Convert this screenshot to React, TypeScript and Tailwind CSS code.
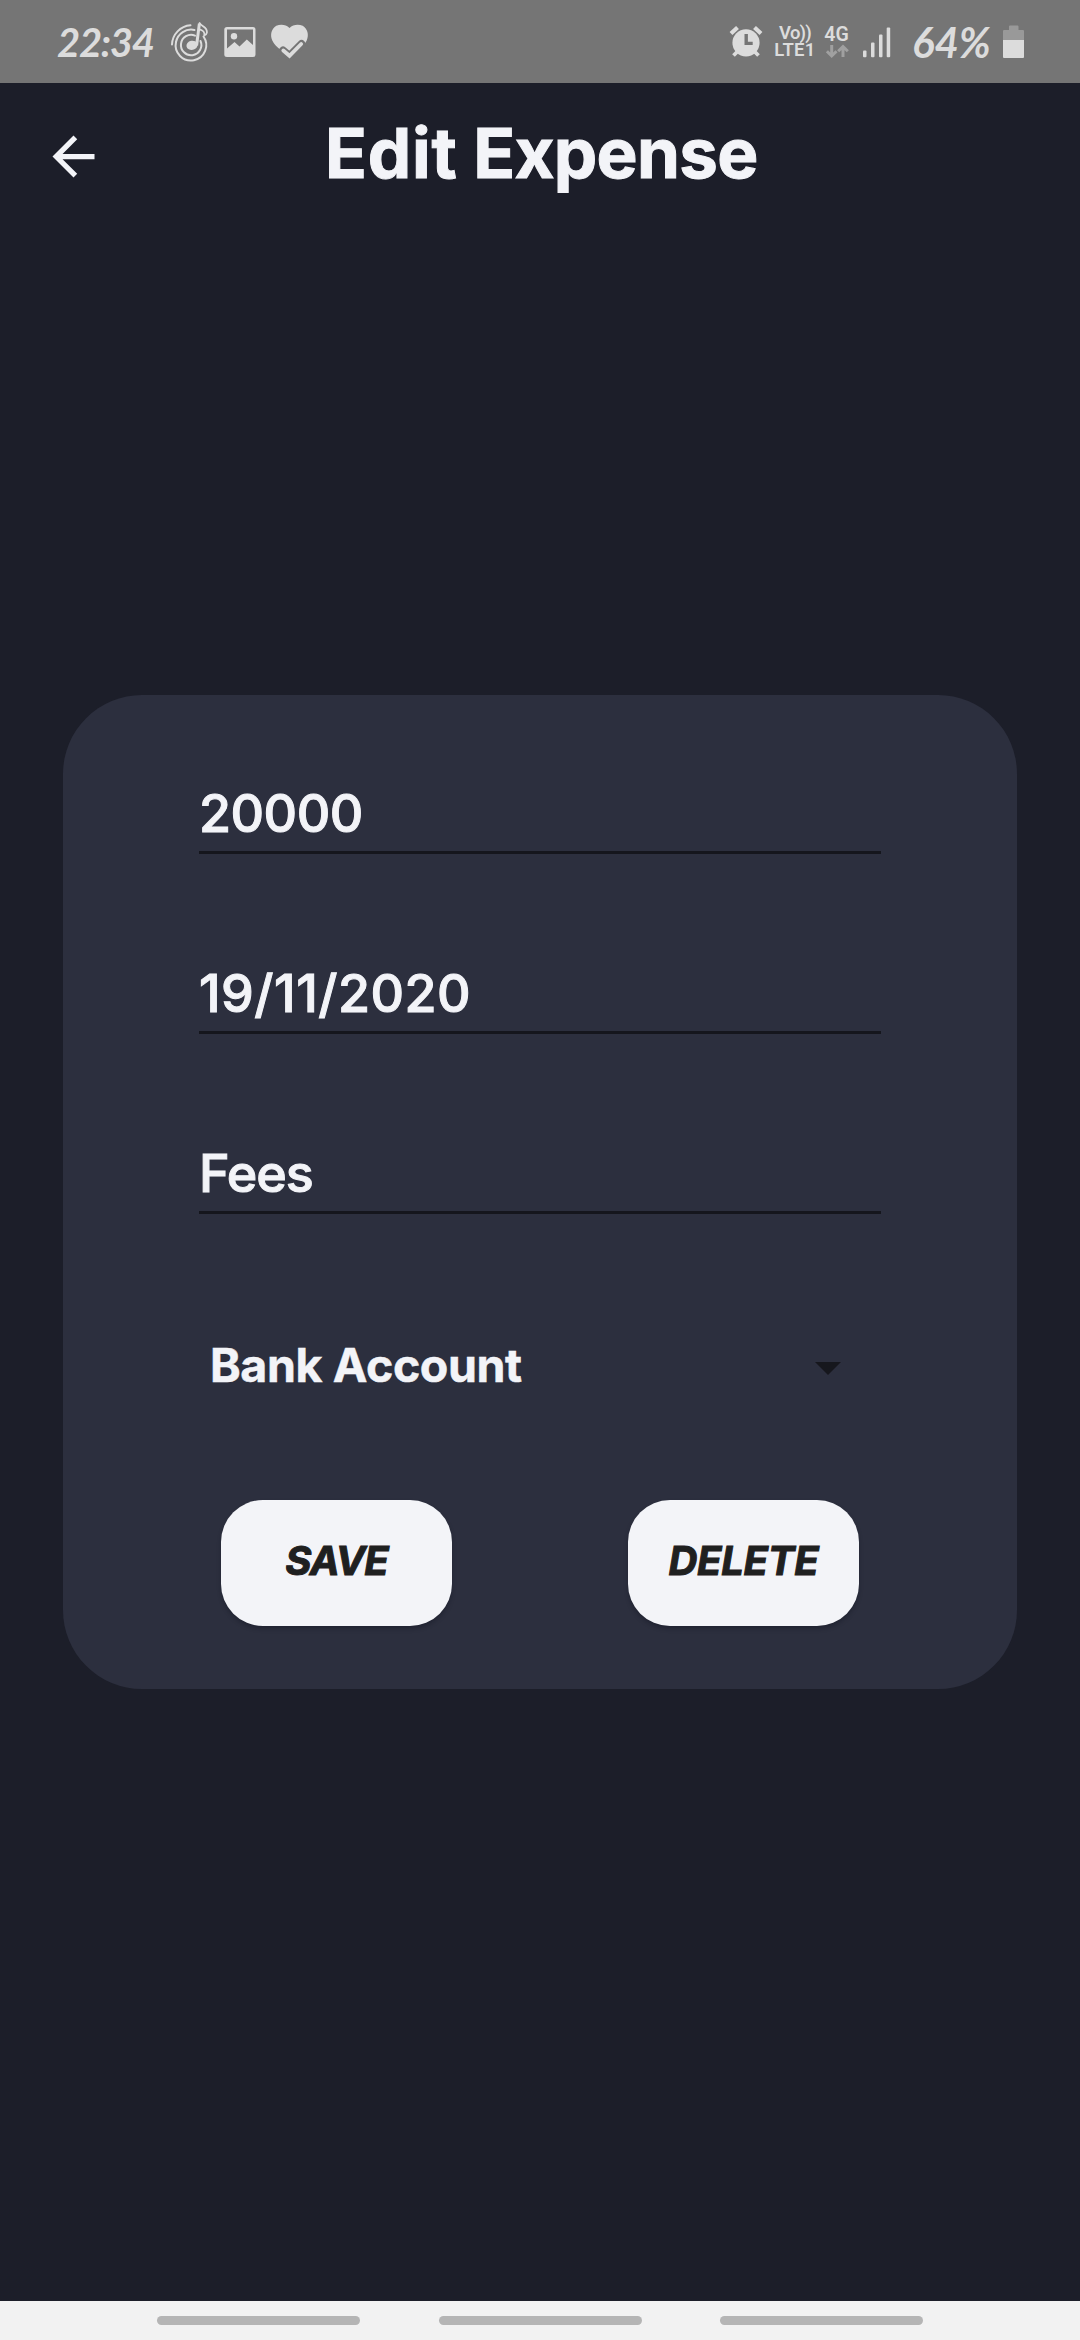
function MusicIcon() {
  return (
    <svg className="ml-[13px] h-[46px] w-11 shrink-0" viewBox="166 19 44 46" fill="none" stroke="#dcdcdc" strokeWidth="2" strokeLinecap="round">
      <path d="M171 44.5A20 20 0 0 1 189.5 25.3" />
      <path d="M175 42A15.5 15.5 0 0 1 193.5 30" />
      <path d="M175 42A15.3 15.3 0 1 0 202.5 36.5" />
      <path d="M194 35.6A10.2 10.2 0 1 0 199.5 41" />
      <ellipse cx="191" cy="45.3" rx="5.6" ry="4.6" fill="#dcdcdc" stroke="none" transform="rotate(-12 191 45.3)" />
      <path d="M195.6 45.5L198.4 23.5" strokeWidth="3" strokeLinecap="butt" />
      <path d="M198.6 23c1.6 3.8 8 3.6 7.3 9.6c-.3 1.6-1.6 2.6-2.6 2.9c.9-4.6-2.5-5.2-5-6.3" strokeWidth="1.8" strokeLinejoin="round" />
    </svg>
  );
}

function ImageIcon() {
  return (
    <svg className="ml-3 h-8 w-[34px] shrink-0" viewBox="222 25 34 32">
      <path
        fill="#dcdcdc"
        fillRule="evenodd"
        d="M226 26H252Q254.5 26 254.5 28.5V53.5Q254.5 56 252 56H226Q223.3 56 223.3 53.5V28.5Q223.3 26 226 26ZM226 28.5V47.5L233.5 41L238.5 45.5L245.8 38.5L252 44V28.5Z"
      />
      <circle cx="233" cy="35.3" r="3.2" fill="#dcdcdc" />
    </svg>
  );
}

function HeartIcon() {
  return (
    <svg className="ml-3 h-10 w-[42px] shrink-0" viewBox="268 21 42 40" fill="none">
      <path fill="#dcdcdc" d="M288.5 27C285 23.3 279.5 22.8 275.3 24.8C270.5 27.5 268.8 34 271.3 39.5C273.5 44.5 278 47.5 288.5 57C299 47.5 303.5 44.5 305.7 39.5C308.2 34 306.5 27.5 301.7 24.8C297.5 22.8 292 23.3 288.5 27Z" />
      <path d="M281.5 48L288.5 54.5L300.5 42.5L309 46V61H276Z" fill="#757575" />
      <path d="M282 49.5L288.5 55L300.5 43" stroke="#757575" strokeWidth="8" strokeLinecap="round" />
      <path d="M282.3 49.5L288.5 54.8L300.2 43" stroke="#dcdcdc" strokeWidth="3.8" strokeLinecap="round" />
    </svg>
  );
}

function AlarmIcon() {
  return (
    <svg className="h-9 w-9 shrink-0" viewBox="728 24 36 36" stroke="#dcdcdc" fill="none">
      <circle cx="746" cy="42.8" r="13.6" fill="#dcdcdc" stroke="none" />
      <path d="M731 33.5L737.5 27.5M761 33.5L754.5 27.5" strokeWidth="4.2" />
      <path d="M733.5 55.5L739 50M758.5 55.5L753 50" strokeWidth="3.8" />
      <path d="M746.2 34V43.4H752.7" stroke="#757575" strokeWidth="3.4" />
    </svg>
  );
}

function DataArrows() {
  return (
    <svg className="h-[15px] w-6" viewBox="824 45 24 15" stroke="#a0a0a0" strokeWidth="3" fill="none">
      <path d="M830.7 46V57M825.9 52.2L830.7 57L835.5 52.2M842 58V47.5M837.2 52.3L842 47.5L846.8 52.3" />
    </svg>
  );
}

function SignalIcon() {
  return (
    <svg className="ml-[13px] h-8 w-[29px] shrink-0" viewBox="862 26 29 32" fill="#dcdcdc">
      <rect x="863" y="50.5" width="3.5" height="6.8" rx="1" />
      <rect x="871" y="42.5" width="3.5" height="14.8" rx="1" />
      <rect x="879" y="34.5" width="3.5" height="22.8" rx="1" />
      <rect x="886.7" y="27.5" width="3.5" height="29.8" rx="1" />
    </svg>
  );
}

function BatteryIcon() {
  return (
    <svg className="h-[34px] w-[21px] shrink-0" viewBox="1003 25 21 34">
      <path fill="#999" d="M1009 30V26.5Q1009 25.5 1010 25.5H1017.5Q1018.5 25.5 1018.5 26.5V30H1023Q1024 30 1024 31V40H1003V31Q1003 30 1004 30Z" />
      <path fill="#dcdcdc" d="M1003 40H1024V57Q1024 58 1023 58H1004Q1003 58 1003 57Z" />
    </svg>
  );
}

function StatusBar() {
  return (
    <div className="flex h-[83px] shrink-0 items-center justify-between bg-[#757575] pr-14 pl-[57px] text-[#dcdcdc]">
      <div className="flex h-full items-center">
        <span className="mt-px w-[97px] font-['Lato'] text-[40px] leading-[48px] font-bold tracking-[-1.3px] whitespace-nowrap italic">22:34</span>
        <MusicIcon />
        <ImageIcon />
        <HeartIcon />
      </div>
      <div className="flex h-full items-center font-['Roboto'] font-medium">
        <AlarmIcon />
        <div className="ml-[11px] flex w-[40px] flex-col items-center text-[18.5px] leading-[17px] font-semibold whitespace-nowrap">
          <span className="tracking-[-0.8px]">Vo))</span>
          <span className="tracking-[0.3px]">LTE1</span>
        </div>
        <div className="ml-[9px] flex w-[25px] flex-col items-center">
          <span className="text-[19.5px] leading-[19px] font-semibold">4G</span>
          <DataArrows />
        </div>
        <SignalIcon />
        <span className="mt-px ml-[21px] w-[91px] font-['Lato'] text-[42px] leading-[48px] font-bold whitespace-nowrap italic">64%</span>
        <BatteryIcon />
      </div>
    </div>
  );
}

function Header() {
  return (
    <header className="flex h-[140px] shrink-0 items-center">
      <button className="mt-[7px] ml-[42px] h-[63px] w-[63px]" aria-label="Back">
        <svg className="h-full w-full" viewBox="0 0 24 24" fill="#f3f4f8">
          <path d="M20 11H7.83l5.59-5.59L12 4l-8 8 8 8 1.41-1.41L7.83 13H20v-2z" />
        </svg>
      </button>
      <h1 className="ml-[220px] text-[69px] leading-[84px] font-bold tracking-[-0.7px] [-webkit-text-stroke:1px_#f3f4f8]">
        <span className="tracking-[0.8px]">Edit</span> Expense
      </h1>
    </header>
  );
}

function Field({ value, spacing }: { value: string; spacing: string }) {
  return (
    <div className={`h-[71px] border-b-[3px] border-[#15161d] text-[52px] leading-[62px] font-medium [-webkit-text-stroke:1px_#f3f4f8] ${spacing}`}>{value}</div>
  );
}

function ActionButton({ label, spacing }: { label: string; spacing: string }) {
  return (
    <button className={`h-[126px] w-[231px] rounded-[42px] bg-[#f3f4f8] pb-[5px] text-[40px] font-bold text-[#1f2020] italic shadow-[0_3px_5px_-1px_rgba(10,12,25,0.4)] [-webkit-text-stroke:1px_#1f2020] ${spacing}`}>
      {label}
    </button>
  );
}

export default function App() {
  return (
    <div className="flex h-[2340px] w-[1080px] flex-col overflow-hidden bg-[#1c1e29] font-['Inter',sans-serif] text-[#f3f4f8]">
      <StatusBar />
      <Header />
      <main className="flex-1">
        <section className="mx-[63px] mt-[472px] h-[994px] rounded-[79px] bg-[#2c2f3e] px-[136px] pt-[88px]">
          <div className="flex flex-col gap-[109px]">
            <Field value="20000" spacing="tracking-[-0.5px]" />
            <Field value="19/11/2020" spacing="tracking-[0.5px]" />
            <Field value="Fees" spacing="tracking-[-1px]" />
          </div>
          <div className="mt-[121px] flex h-[60px] items-center justify-between pr-[40px] pl-[11px]">
            <span className="text-[46.5px] leading-[60px] font-bold tracking-[-0.4px] [-webkit-text-stroke:0.5px_#f3f4f8]">Bank Account</span>
            <svg className="mt-[7px] h-[13px] w-[26px]" viewBox="0 0 26 13" fill="#16171d">
              <path d="M0 0H26L13 13Z" />
            </svg>
          </div>
          <div className="mt-[105px] flex justify-between px-[22px]">
            <ActionButton label="SAVE" spacing="tracking-[-1px]" />
            <ActionButton label="DELETE" spacing="tracking-[-0.3px]" />
          </div>
        </section>
      </main>
      <nav className="flex h-[39px] shrink-0 items-start justify-between bg-[#f2f2f2] px-[157px] pt-[15px]">
        <div className="h-[9px] w-[203px] rounded-full bg-[#b5b5b5]" />
        <div className="h-[9px] w-[203px] rounded-full bg-[#b5b5b5]" />
        <div className="h-[9px] w-[203px] rounded-full bg-[#b5b5b5]" />
      </nav>
    </div>
  );
}
